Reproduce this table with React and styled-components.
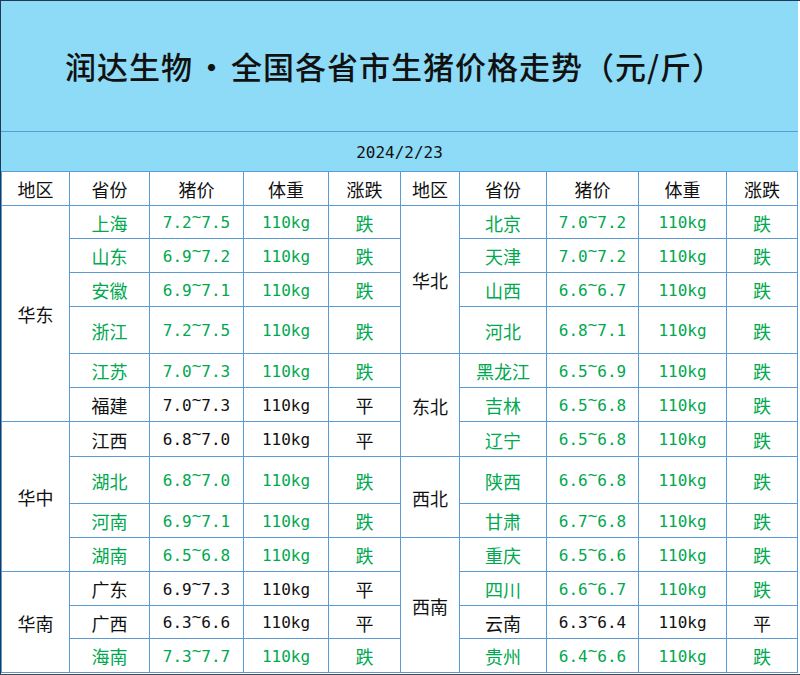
import React from 'react';
import styled, { createGlobalStyle } from 'styled-components';

const GlobalStyle = createGlobalStyle`
  html, body {
    margin: 0;
    padding: 0;
    background: #ffffff;
  }
`

const CJK = `"Noto Sans CJK SC", "Noto Sans", sans-serif`
const MONO = `"DejaVu Sans Mono", "Liberation Mono", monospace`
const GREEN = '#00a84f'
const LINE = '#5b9bd5'

const Sheet = styled.div`
  width: 800px;
  height: 675px;
  box-sizing: border-box;
  border-top: 1px solid #1f3a57;
  border-left: 1px solid #1f3a57;
  border-bottom: 1px solid #4a4a4a;
  padding-bottom: 1px;
  display: flex;
  flex-direction: column;
  background: #ffffff;
  overflow: hidden;
`
const TitleBand = styled.div`
  height: 130px;
  width: 787px;
  flex: none;
  background: #8ddbf7;
  border-bottom: 1px solid ${LINE};
  display: flex;
  align-items: center;
  justify-content: center;
  padding-right: 10px;
  box-sizing: content-box;
`
const Title = styled.h1`
  margin: 0;
  margin-top: -2px;
  font-family: ${CJK};
  font-size: 31px;
  font-weight: 500;
  letter-spacing: 1px;
  word-spacing: -5px;
  color: #111111;
`
const DateBand = styled.div`
  height: 39px;
  width: 797px;
  flex: none;
  background: #8ddbf7;
  display: flex;
  align-items: center;
  justify-content: center;
  font-family: ${MONO};
  font-size: 16px;
  color: #111111;
  padding-top: 2px;
  box-sizing: border-box;
`
const Table = styled.div`
  width: 797px;
  box-sizing: border-box;
  flex: none;
  display: grid;
  grid-template-columns: 67px 79px 93px 84px 71px 58px 86px 91px 87px 70px;
  grid-template-rows: 33px 32px 33px 33px 46px 33px 33px 34px 46px 33px 33px 33px 32px 33px;
  gap: 1px;
  padding: 1px;
  background: ${LINE};
`
const Cell = styled.div`
  grid-column: ${p => p.$col};
  grid-row: ${p => p.$row};
  background: #ffffff;
  display: flex;
  align-items: center;
  justify-content: center;
  font-family: ${p => (p.$mono ? MONO : CJK)};
  font-size: ${p => (p.$mono ? '16px' : '18px')};
  color: ${p => (p.$green ? GREEN : '#111111')};
  white-space: nowrap;
  padding-top: 1px;
  box-sizing: border-box;
`
const Tilde = styled.span`
  display: inline-block;
  transform: translateY(-6px);
`

const left = [
  { region: '华东', rows: [
    ['上海', '7.2~7.5', '跌'],
    ['山东', '6.9~7.2', '跌'],
    ['安徽', '6.9~7.1', '跌'],
    ['浙江', '7.2~7.5', '跌'],
    ['江苏', '7.0~7.3', '跌'],
    ['福建', '7.0~7.3', '平'],
  ] },
  { region: '华中', rows: [
    ['江西', '6.8~7.0', '平'],
    ['湖北', '6.8~7.0', '跌'],
    ['河南', '6.9~7.1', '跌'],
    ['湖南', '6.5~6.8', '跌'],
  ] },
  { region: '华南', rows: [
    ['广东', '6.9~7.3', '平'],
    ['广西', '6.3~6.6', '平'],
    ['海南', '7.3~7.7', '跌'],
  ] },
]

const right = [
  { region: '华北', rows: [
    ['北京', '7.0~7.2', '跌'],
    ['天津', '7.0~7.2', '跌'],
    ['山西', '6.6~6.7', '跌'],
    ['河北', '6.8~7.1', '跌'],
  ] },
  { region: '东北', rows: [
    ['黑龙江', '6.5~6.9', '跌'],
    ['吉林', '6.5~6.8', '跌'],
    ['辽宁', '6.5~6.8', '跌'],
  ] },
  { region: '西北', rows: [
    ['陕西', '6.6~6.8', '跌'],
    ['甘肃', '6.7~6.8', '跌'],
  ] },
  { region: '西南', rows: [
    ['重庆', '6.5~6.6', '跌'],
    ['四川', '6.6~6.7', '跌'],
    ['云南', '6.3~6.4', '平'],
    ['贵州', '6.4~6.6', '跌'],
  ] },
]

const headers = ['地区', '省份', '猪价', '体重', '涨跌']

const Price = ({ value }) => {
  const [a, b] = value.split('~')
  return <>{a}<Tilde>~</Tilde>{b}</>
}

const renderSide = (groups, base, key) => {
  const cells = headers.map((h, i) => (
    <Cell key={`${key}-h${i}`} $col={base + i + 1} $row={1}>{h}</Cell>
  ))
  let row = 2
  groups.forEach((g, gi) => {
    cells.push(
      <Cell key={`${key}-g${gi}`} $col={base + 1} $row={`${row} / span ${g.rows.length}`}>
        {g.region}
      </Cell>
    )
    g.rows.forEach(([name, price, change], ri) => {
      const green = change === '跌'
      const r = row + ri
      cells.push(
        <Cell key={`${key}-${r}-n`} $col={base + 2} $row={r} $green={green}>{name}</Cell>,
        <Cell key={`${key}-${r}-p`} $col={base + 3} $row={r} $green={green} $mono><Price value={price} /></Cell>,
        <Cell key={`${key}-${r}-w`} $col={base + 4} $row={r} $green={green} $mono>110kg</Cell>,
        <Cell key={`${key}-${r}-c`} $col={base + 5} $row={r} $green={green}>{change}</Cell>
      )
    })
    row += g.rows.length
  })
  return cells
}

const App = () => {
  return (
    <>
      <GlobalStyle />
      <Sheet>
        <TitleBand>
          <Title>润达生物 · 全国各省市生猪价格走势（元/斤）</Title>
        </TitleBand>
        <DateBand>2024/2/23</DateBand>
        <Table>
          {renderSide(left, 0, 'l')}
          {renderSide(right, 5, 'r')}
        </Table>
      </Sheet>
    </>
  )
}

export default App
